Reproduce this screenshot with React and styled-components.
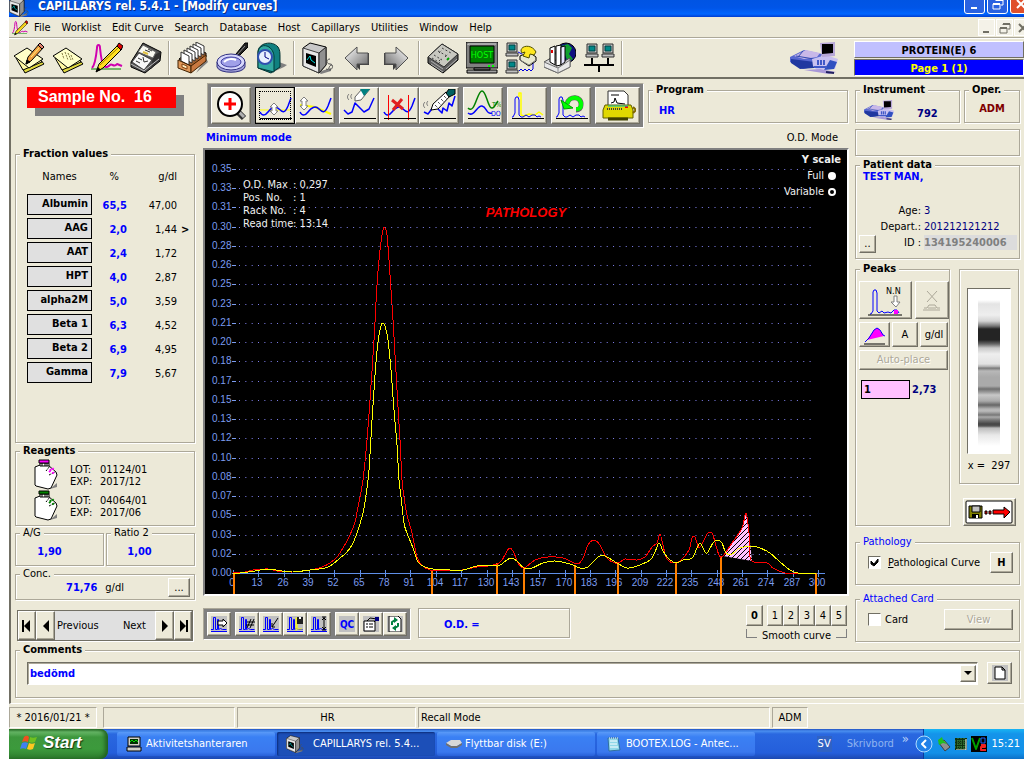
import React from 'react';
import styled, { createGlobalStyle, css } from 'styled-components';

const face = '#ece9d8';
const shade = '#aca899';
const dark = '#716f64';
const blue = '#0000ff';
const navy = '#000080';

const uiFont = '"DejaVu Sans Condensed", "DejaVu Sans", "Noto Sans", sans-serif';
const arial = '"Liberation Sans", Arial, sans-serif';

const GlobalStyle = createGlobalStyle`
  * {
    box-sizing: border-box;
  }

  body {
    margin: 0;
    background: #fff;
    color: #000;
    font-family: ${uiFont};
    font-size: 11px;
    line-height: 12px;
    overflow-x: hidden;
  }

  button, input, select {
    font: inherit;
    color: inherit;
    margin: 0;
    padding: 0;
  }

  svg {
    display: block;
    flex: none;
  }
`;

const raised = css`
  border: 1px solid;
  border-color: #fff ${dark} ${dark} #fff;
  box-shadow: inset -1px -1px 0 ${shade};
`;

const sunken = css`
  border: 1px solid;
  border-color: ${shade} #fff #fff ${shade};
`;

const etched = css`
  border: 1px solid ${shade};
  box-shadow: 1px 1px 0 #fff, inset 1px 1px 0 #fff;
`;

/* window frame */

const Screen = styled.div`
  padding: 0 0 9px 9px;
`;

const TitleBar = styled.header`
  display: flex;
  align-items: flex-end;
  height: 17px;
  overflow: hidden;
  background: linear-gradient(#0054e3 0, #0055e8 8px, #0066ff 14px, #003dd0 17px);
`;

const TitleText = styled.h1`
  flex: 1;
  margin: 0 0 0 9px;
  color: #fff;
  font-size: 12px;
  line-height: 13px;
  padding-bottom: 4px;
  text-shadow: 1px 1px 0 #0a2a80;
  white-space: nowrap;
`;

const Captions = styled.div`
  display: flex;
  gap: 2px;
  margin-right: -7px;
  padding-bottom: 3px;
`;

const Caption = styled.button`
  width: 21px;
  height: 21px;
  display: flex;
  align-items: center;
  justify-content: center;
  border: 1px solid #fff;
  border-radius: 3px;
  background: ${({ $close }) => ($close ? '#e0502c' : '#2a62e0')};
`;

const MenuBar = styled.nav`
  display: flex;
  align-items: center;
  height: 22px;
  padding-left: 3px;
  background: ${face};
  border-bottom: 1px solid #fff;
  box-shadow: inset 0 -1px 0 ${shade};
  overflow: hidden;
`;

const MenuItem = styled.button`
  border: 0;
  background: none;
  padding: 0 5px 0 6px;
  line-height: 18px;
`;

const ChildButtons = styled.div`
  display: flex;
  gap: 1px;
  margin: 0 -7px 0 auto;
`;

const ChildButton = styled.button`
  width: 17px;
  height: 17px;
  display: flex;
  align-items: center;
  justify-content: center;
  border: 1px solid #fff;
  background: #f4f2e8;
`;

const Toolbar = styled.div`
  display: flex;
  align-items: center;
  height: 38px;
  background: ${face};
`;

const IconButton = styled.button`
  width: 39px;
  height: 38px;
  display: flex;
  align-items: center;
  justify-content: center;
  border: 0;
  background: none;
`;

const Divider = styled.div`
  width: 2px;
  height: 34px;
  margin: 0 3px;
  background: ${shade};
  border-right: 1px solid #fff;
`;

const ToolbarEnd = styled.div`
  display: flex;
  align-items: center;
  gap: 16px;
  margin-left: auto;
`;

const Banner = styled.div`
  width: 170px;
`;

const BannerLine = styled.div`
  height: 17px;
  margin-top: 1px;
  border: 1px solid;
  border-color: ${({ $page }) => ($page ? `${dark} #fff #fff ${dark}` : `#fff ${dark} ${dark} #fff`)};
  background: ${({ $page }) => ($page ? blue : '#c0c0ff')};
  color: ${({ $page }) => ($page ? '#ffff00' : '#000')};
  font-weight: bold;
  line-height: 17px;
  text-align: center;
`;

const Workspace = styled.main`
  background: ${face};
  border-top: 2px solid ${dark};
  border-left: 2px solid ${dark};
  border-bottom: 1px solid #fff;
  padding: 0 4px 5px;
`;

const Columns = styled.div`
  display: flex;
`;

const LeftColumn = styled.section`
  width: 180px;
  flex: none;
  display: flex;
  flex-direction: column;

  > fieldset {
    flex: none;
  }
`;

const CenterColumn = styled.section`
  flex: 1;
  min-width: 0;
  margin: 0 6px 0 8px;
`;

const RightColumn = styled.section`
  width: 165px;
  flex: none;
  padding-top: 5px;
`;

/* group boxes */

const Group = styled.fieldset`
  ${etched}
  min-width: 0;
  margin: ${({ $top }) => $top || 0}px 0 0;
  padding: 0;
  min-height: ${({ $h }) => $h}px;
  ${({ $w }) => ($w ? `width: ${$w}px;` : 'flex: 1 0 auto;')}
`;

const Legend = styled.legend`
  margin-left: 4px;
  padding: 0 3px;
  background: ${face};
  line-height: 12px;
  font-weight: ${({ $plain }) => ($plain ? 'normal' : 'bold')};
  color: ${({ $link }) => ($link ? blue : '#000')};
`;

const Value = styled.span`
  color: ${({ $color }) => $color || blue};
  font-weight: bold;
`;

const PushButton = styled.button`
  ${raised}
  display: flex;
  align-items: center;
  justify-content: center;
  flex: none;
  width: ${({ $w }) => $w}px;
  height: ${({ $h }) => $h}px;
  background: ${face};
  font-weight: ${({ $bold }) => ($bold ? 'bold' : 'normal')};

  &:disabled {
    color: ${shade};
    text-shadow: 1px 1px 0 #fff;
  }
`;

/* left column */

const SampleBadge = styled.div`
  width: 149px;
  height: 21px;
  margin: 8px 0 40px 12px;
  padding-left: 11px;
  background: #f00;
  box-shadow: 8px 8px 0 #808080;
  color: #fff;
  font: bold 16px/19px ${arial};
  white-space: pre;
`;

const FractionTable = styled.table`
  width: 168px;
  margin-left: 11px;
  border-collapse: collapse;
  table-layout: fixed;

  th {
    height: 34px;
    padding: 0;
    font-weight: normal;
  }

  td {
    height: 24px;
    padding: 0;
    text-align: right;
  }

  th:last-child {
    text-align: right;
    padding-right: 18px;
  }
`;

const FractionName = styled.div`
  width: 65px;
  height: 21px;
  margin-bottom: 3px;
  padding-right: 3px;
  border: 1px solid #000;
  background: #e0e0e0;
  font-weight: bold;
  line-height: 17px;
`;

const Mark = styled.span`
  display: inline-block;
  width: 18px;
  padding-left: 4px;
  font-weight: bold;
  text-align: left;
`;

const ReagentList = styled.div`
  padding: 2px 0 0 17px;
`;

const Reagent = styled.div`
  display: flex;
  align-items: center;
  height: 31px;
  gap: 10px;
`;

const Lots = styled.dl`
  display: grid;
  grid-template-columns: 30px auto;
  margin: 0;
  padding-top: 2px;

  dd {
    margin: 0;
  }
`;

const Split = styled.div`
  display: flex;
  gap: 2px;
  margin: 1px 0 2px;

  > fieldset {
    flex: 1;
  }
`;

const Centered = styled.div`
  text-align: center;
  line-height: 26px;
  padding-right: ${({ $shift }) => $shift || 0}px;
`;

const ConcRow = styled.div`
  display: flex;
  align-items: center;
  gap: 8px;
  margin-top: -2px;
  padding: 0 4px 0 50px;

  > button {
    margin-left: auto;
  }
`;

const Pager = styled.div`
  display: flex;
  align-items: center;
  height: 31px;
  margin: 10px 2px 3px;
  border: 1px solid ${dark};
  background: #e0e0e0;
  box-shadow: 1px 1px 0 #fff;
`;

const PagerText = styled.div`
  flex: 1;
  display: flex;
  justify-content: space-between;
  padding: 0 9px 0 2px;
`;

/* centre column */

const ToolRow = styled.div`
  display: flex;
  align-items: flex-start;
  gap: 4px;
  height: 48px;
  padding: 4px 1px 0 4px;
`;

const ToolPanel = styled.div`
  display: flex;
  gap: 4px;
  padding: ${({ $pad }) => $pad}px;
  border: 1px solid;
  border-color: ${shade} #fff #fff ${shade};
  background: #808080;
`;

const ToolGroup = styled.div`
  display: flex;
`;

const ToolButton = styled(PushButton)`
  overflow: hidden;
  ${({ $active }) =>
    $active &&
    css`
      border-color: #000;
      outline: 1px dotted #000;
      outline-offset: -5px;
    `}
`;

const ProgramBody = styled.div`
  padding: 9px 10px 0;
`;

const ModeRow = styled.div`
  display: flex;
  justify-content: space-between;
  padding: 0 11px 0 3px;
  line-height: 21px;
`;

const Plot = styled.div`
  position: relative;
  height: 448px;
  overflow: hidden;
  border: 2px solid;
  border-color: #808080 #fff #fff #808080;
  background: #000;
  color: #f0f0f0;

  > svg {
    width: 100%;
    height: 444px;
  }
`;

const RunInfo = styled.dl`
  position: absolute;
  top: 28px;
  left: 38px;
  display: grid;
  grid-template-columns: 50px auto;
  margin: 0;
  line-height: 13px;

  dd {
    margin: 0;
  }

  dt {
    white-space: nowrap;
  }
`;

const ScaleBox = styled.div`
  position: absolute;
  top: 2px;
  right: 6px;
  display: flex;
  flex-direction: column;
  align-items: flex-end;
  line-height: 16px;

  label {
    display: flex;
    align-items: center;
    gap: 4px;
    padding-right: 5px;
  }
`;

const Radio = styled.input`
  appearance: none;
  width: 8px;
  height: 8px;
  border-radius: 50%;
  background: #fff;

  &:checked {
    background: #000;
    border: 2px solid #fff;
  }
`;

const BottomRow = styled.div`
  display: flex;
  align-items: flex-start;
  padding: 9px 2px 0 0;

  > div:first-child {
    margin-top: 3px;
  }
`;

const OdBox = styled.div`
  ${etched}
  width: 152px;
  height: 30px;
  margin: 3px auto 0 7px;
  padding-left: 25px;
  color: ${blue};
  font-weight: bold;
  line-height: 31px;
`;

const Smooth = styled.div`
  width: 101px;
`;

const SmoothButtons = styled.div`
  display: flex;
  justify-content: space-between;

  > div {
    display: flex;
  }
`;

const SmoothLabel = styled.div`
  display: flex;
  align-items: flex-end;
  justify-content: space-between;
  height: 16px;
  white-space: nowrap;

  &::before,
  &::after {
    content: '';
    flex: 1;
    height: 8px;
    margin-bottom: 4px;
    border: 0 solid #808080;
    border-bottom-width: 1px;
  }

  &::before {
    border-left-width: 1px;
    margin-right: 5px;
  }

  &::after {
    border-right-width: 1px;
    margin-left: 5px;
  }
`;

/* right column */

const Row = styled.div`
  display: flex;
  gap: ${({ $gap }) => $gap || 0}px;
  margin-top: ${({ $top }) => $top || 0}px;
`;

const InstrumentBody = styled.div`
  display: flex;
  align-items: flex-end;
  gap: 22px;
  padding: 4px 7px 1px;
`;

const BlankBox = styled.div`
  ${etched}
  height: 27px;
  margin: 6px 0 3px;
`;

const PatientName = styled.div`
  padding-left: 7px;
  height: 32px;
`;

const PatientGrid = styled.dl`
  display: grid;
  grid-template-columns: 18px 41px auto;
  column-gap: 3px;
  margin: 0;
  padding: 0 2px 0 3px;
  line-height: 16px;

  dt {
    grid-column: 2;
    text-align: right;
    white-space: nowrap;
  }

  dt:last-of-type {
    grid-column: auto;
  }

  dd {
    margin: 0;
    color: ${navy};
  }
`;

const PatientId = styled.span`
  display: block;
  height: 15px;
  background: #dcdcdc;
  color: #808080;
  font-weight: bold;
`;

const PeaksBody = styled.div`
  display: grid;
  gap: 3px;
  padding: 6px 3px 0;
`;

const PeakEntry = styled.label`
  display: flex;
  align-items: center;
  gap: 2px;
  margin: 7px 0 0 2px;
`;

const PeakInput = styled.input`
  width: 49px;
  height: 19px;
  padding: 0 2px;
  border: 1px solid #000;
  background: #ffc0ff;
  font-weight: bold;
`;

const GelColumn = styled.div`
  display: flex;
  flex-direction: column;
  align-items: center;
  width: 60px;
  padding-top: 6px;
`;

const GelBox = styled.div`
  ${etched}
  width: 60px;
  height: 215px;
  margin-bottom: 14px;
  padding-top: 18px;
  text-align: center;
  white-space: pre;
`;

const GelFrame = styled.div`
  border: 1px solid;
  border-color: ${dark} #fff #fff ${dark};
  width: 44px;
  height: 166px;
  margin: 0 auto 6px;
  padding-top: 11px;
  background: #fff;
`;

const Gel = styled.div`
  width: 22px;
  height: 146px;
  margin: 0 auto;
  background: linear-gradient(
    #fff 0, #e4e4e4 4px, #eee 15px, #d4d4d4 21px, #777 26px, #242424 29px, #242424 40px,
    #666 44px, #c8c8c8 48px, #eee 54px, #e2e2e2 64px, #aaa 67px, #777 68px, #b8b8b8 71px,
    #aaa 77px, #aaa 86px, #707070 89px, #999 92px, #c8c8c8 95px, #aaa 101px, #666 105px,
    #b4b4b4 109px, #bbb 111px, #777 115px, #aaa 117px, #777 120px, #444 124px, #555 126px,
    #bbb 128px, #e8e8e8 135px, #fff 146px
  );
`;

const CheckRow = styled.div`
  display: flex;
  align-items: center;
  justify-content: space-between;
  margin-top: 4px;
  padding: 0 6px 0 12px;

  label {
    display: flex;
    align-items: center;
    gap: ${({ $gap }) => $gap}px;
    white-space: nowrap;
  }
`;

const CheckBox = styled.span`
  ${sunken}
  display: grid;
  width: 13px;
  height: 13px;
  background: #fff;
  border-top-color: ${dark};
  border-left-color: ${dark};

  > * {
    grid-area: 1 / 1;
  }

  input {
    appearance: none;
    width: 11px;
    height: 11px;
  }

  svg {
    visibility: hidden;
    pointer-events: none;
  }

  input:checked + svg {
    visibility: visible;
  }
`;

/* comments, status bar, taskbar */

const CommentRow = styled.div`
  display: flex;
  gap: 9px;
  padding: 6px 7px 0 11px;
`;

const Combo = styled.div`
  position: relative;
  flex: 1;
  height: 23px;
  border: 1px solid;
  border-color: ${dark} #fff #fff ${dark};
  box-shadow: inset 1px 1px 0 ${shade};
  background: #fff;
`;

const ComboSelect = styled.select`
  appearance: none;
  width: 100%;
  height: 21px;
  padding: 0 2px;
  border: 0;
  background: none;
  color: ${blue};
  font-weight: bold;
`;

const ComboArrow = styled.span`
  ${raised}
  position: absolute;
  top: 2px;
  right: 1px;
  display: flex;
  align-items: center;
  justify-content: center;
  width: 16px;
  height: 17px;
  background: ${face};
  pointer-events: none;
`;

const StatusBar = styled.footer`
  display: flex;
  gap: 2px;
  padding: 3px 0 1px;
  background: ${face};
`;

const StatusCell = styled.div`
  ${sunken}
  ${({ $w }) => ($w ? `width: ${$w}px;` : 'flex: 1;')}
  height: 21px;
  padding-left: 2px;
  line-height: 20px;
  text-align: ${({ $left }) => ($left ? 'left' : 'center')};

  &:first-child {
    margin-right: 4px;
    padding: 0;
  }

  &:last-child {
    margin-right: 216px;
    padding: 0;
  }
`;

const Taskbar = styled.footer`
  display: flex;
  align-items: center;
  height: 30px;
  background: linear-gradient(#1f4fc0 0, #4a90f0 2px, #2a68e0 5px, #245edb 24px, #1c48b0 30px);
  color: #fff;
`;

const StartButton = styled.button`
  display: flex;
  align-items: center;
  gap: 5px;
  width: 99px;
  height: 30px;
  margin-right: 9px;
  padding: 0 0 2px 11px;
  border: 0;
  border-radius: 0 8px 8px 0;
  background: linear-gradient(#2f7a2f 0, #68b868 3px, #3d973d 8px, #3c9a3c 20px, #2c7c2c 30px);
  box-shadow: inset -3px 0 4px #206020;
  color: #fff;
  font: italic bold 17px/20px ${arial};
  text-shadow: 1px 1px 1px #103810;
`;

const Task = styled.button`
  display: flex;
  align-items: center;
  gap: ${({ $gap }) => $gap || 4}px;
  flex: 0 1 158px;
  min-width: 0;
  height: 24px;
  margin-right: 2px;
  padding-left: 9px;
  border: 0;
  border-radius: 2px;
  background: ${({ $active }) => ($active ? '#1c4fb8' : 'linear-gradient(#5a9af8, #3a80f4 5px, #3a78ee 20px, #2860d8)')};
  box-shadow: ${({ $active }) => ($active ? 'inset 1px 1px 2px #0c2c78' : 'none')};
  text-align: left;
  white-space: nowrap;
`;

const Tray = styled.div`
  display: flex;
  align-items: center;
  gap: 4px;
  width: 101px;
  height: 30px;
  padding-right: 4px;
  border-left: 1px solid #0a3a9c;
  background: linear-gradient(#18b4f4, #1494ea 5px, #1290e8 24px, #0c70c8);
  color: #fff;

  > svg:first-child {
    margin-left: -9px;
  }

  time {
    margin-left: auto;
  }
`;

const TaskbarRight = styled.div`
  display: flex;
  align-items: center;
  margin-left: auto;
  color: #8fb4f0;
`;

const Language = styled.span`
  margin-right: 15px;
  padding: 2px 1px;
  background: #2f62c4;
  color: #fff;
`;

const Chevrons = styled.span`
  margin: 0 14px 10px 8px;
  color: #b8d0f8;
  font-size: 13px;
`;

/* icons */

const Svg = ({ w = 32, h = w, vb, children }) => (
  <svg width={w} height={h} viewBox={vb || `0 0 ${w} ${h}`} fill="none" strokeLinejoin="round" aria-hidden="true">
    {children}
  </svg>
);

const Pencil = () => (
  <g stroke="#000">
    <path d="M13 22l2-7L27 1l4 4-13 14z" fill="#f0a040" />
    <path d="M25 3l4 4" />
    <path d="M27 1l4 4-2 2-4-4z" fill="#e08070" />
    <path d="M13 22l1-4 3 2z" fill="#000" />
    <path d="M18 15L26 6" stroke="#fff080" />
  </g>
);

const Sheets = () => (
  <g stroke="#000">
    <path d="M6 20l6 11 19-9-5-6z" fill="#e0d840" />
    <path d="M3 16l7 12 19-8-6-8z" fill="#fff8a0" />
    <path d="M1 14L14 6l16 11-14 9z" fill="#ffffc8" />
  </g>
);

const EditSheetIcon = () => (
  <Svg>
    <Sheets />
    <Pencil />
  </Svg>
);

const SheetIcon = () => (
  <Svg>
    <Sheets />
    <path d="M10 11l2 6M13 10l3 8M16 11l3 7M19 13l2 5" stroke="#807840" strokeDasharray="2 1" />
  </Svg>
);

const CurvePencilIcon = ({ w = 32 }) => (
  <Svg w={w} vb="0 0 32 32">
    <path d="M0 27h30" stroke="#008000" />
    <path d="M1 26c3-3 4-10 5-20 0-4 3-4 3 0 1 10 2 16 4 18s4 1 6-1 4 3 7-1l5 2" stroke="#d000b0" strokeWidth="2" />
    <path d="M5 30l3-8L27 3l4 4-19 19z" fill="#ffe020" stroke="#000" />
    <path d="M26 4l2-3 4 3-2 4z" fill="#e00000" stroke="#000" />
    <path d="M5 30l2-5 3 3z" fill="#000" />
    <path d="M9 23L27 6" stroke="#a08000" />
  </Svg>
);

const BoxInstrumentIcon = () => (
  <Svg>
    <path d="M1 20L13 1l18 9-1 9-15 12-14-6z" fill="#505050" stroke="#000" />
    <path d="M23 14l7-4v8l-9 9z" fill="#303030" />
    <path d="M13 3l13 7-3 6-15-6z" fill="#f8f8f0" stroke="#606060" />
    <path d="M2 20l7-9 13 7-8 10z" fill="#f8f8f8" stroke="#404040" />
    <path d="M6 19l4 2M8 16l4 2M13 15l1 5 4-1M15 8l5 2M18 7l4 2" stroke="#303030" />
    <path d="M1 22l13 7 1-1 14-11" stroke="#c0c0c0" />
    <path d="M13 10l5 2" stroke="#e0c040" strokeWidth="2" />
  </Svg>
);

const CardBoxIcon = () => (
  <Svg>
    <path d="M19 31l12-11-2-4z" fill="#808080" />
    <path d="M2 17L17 6l12 5v4L15 25z" fill="#a06030" stroke="#000" />
    {[5, 4, 3, 2, 1, 0].map((i) => (
      <path key={i} d={`M${4 + i * 3} ${10 - i * 2}l8 4v9l-8-4z`} fill="#fff" stroke="#303030" />
    ))}
    <path d="M1 18l13 6v7L1 26z" fill="#e09858" stroke="#402000" />
    <path d="M14 24l15-11v6L14 31z" fill="#c87840" stroke="#402000" />
    <path d="M5 22l5 2v3l-5-2z" fill="#fff0c0" stroke="#804010" />
  </Svg>
);

const MagnifierIcon = () => (
  <Svg>
    <path d="M17 18l3-6L29 1h3v4L22 15z" fill="#202020" stroke="#000" />
    <path d="M21 13l8-9" stroke="#909090" />
    <path d="M1 20v5c2 7 26 7 28 0v-5z" fill="#a0a0d8" stroke="#303080" />
    <ellipse cx="15" cy="20" rx="14" ry="8" fill="#d8d8fc" stroke="#303080" />
    <ellipse cx="15" cy="20" rx="10" ry="5" fill="#a0a0e8" stroke="#4040a0" />
    <path d="M8 20c3-3 8-4 12-2" stroke="#fff" strokeWidth="2" />
  </Svg>
);

const ClockIcon = () => (
  <Svg>
    <path d="M16 31l13-6 3-2-8-3z" fill="#808080" />
    <path d="M3 26V10c0-9 14-12 20-5 2 3 2 6 2 10v10l-9 6z" fill="#108080" stroke="#003030" />
    <path d="M3 26V10C4 4 9 2 14 5c4 3 5 7 5 10v15z" fill="#30a8a0" stroke="#003838" />
    <circle cx="10" cy="15" r="7" fill="#e8f0ff" stroke="#3050b0" strokeWidth="2" />
    <path d="M10 10v5l4 2" stroke="#000080" />
  </Svg>
);

const ComputerIcon = ({ w = 32 }) => (
  <Svg w={w} vb="0 0 32 32">
    <path d="M16 30l13-4v3l-10 3z" fill="#808080" />
    <path d="M1 6L8 1l16 4v18l-7 8L1 24z" fill="#c8c8c8" stroke="#000" />
    <path d="M1 6l16 5v20L1 24z" fill="#e8e8e8" stroke="#404040" />
    <path d="M17 11l7-6v18l-7 8z" fill="#909090" stroke="#202020" />
    <path d="M4 11l10 3v11L4 21z" fill="#000" />
    <path d="M5 18l3-4 1 4 4 3" stroke="#00e0e0" />
    <path d="M24 27c4 2 2-4 6-4M28 17c-4 0-4 5 0 5s3 6-1 6" stroke="#505050" />
  </Svg>
);

const ArrowIcon = ({ flip }) => (
  <Svg>
    <defs>
      <linearGradient id="steel" x1="0" y1="0" x2="1" y2="1">
        <stop offset="0" stopColor="#fff" />
        <stop offset="1" stopColor="#606060" />
      </linearGradient>
    </defs>
    <g transform={flip ? 'matrix(-1 0 0 1 32 0)' : undefined}>
      <path d="M8 17l11 11v-5h9V11h-1v11h-8z" fill="#404040" />
      <path d="M4 16L16 5v6h11v11H16v6z" fill="url(#steel)" stroke="#505050" />
    </g>
  </Svg>
);

const KeypadIcon = () => (
  <Svg>
    <path d="M1 15L15 2l16 10v6L16 31 1 21z" fill="#606060" stroke="#000" />
    <path d="M1 15L15 2l16 10-14 13z" fill="#c8c8c0" stroke="#303030" />
    <path d="M7 13l8 5M11 9l9 5M15 6l9 5M5 16l8 5M12 19l3-3M18 15l3-3M12 11l3-3" stroke="#404040" strokeDasharray="2 2" />
    <path d="M4 19l12 8M4 22l12 8M19 27l11-10" stroke="#b0b0b0" />
    <path d="M20 18l2-2" stroke="#00a000" strokeWidth="2" />
  </Svg>
);

const HostIcon = () => (
  <Svg>
    <path d="M0 0h32v26H0z" fill="#808080" stroke="#000" />
    <path d="M2 3V2h28" stroke="#d0d0d0" />
    <path d="M4 4h24v17H4z" fill="#008000" stroke="#000" />
    <text x="16" y="16" textAnchor="middle" fontSize="9" fontFamily={uiFont} fill="#00ff00">HOST</text>
    <path d="M22 24h2M26 24h2" stroke="#00ff00" strokeWidth="2" />
    <path d="M8 26h16v2H8zM1 28h30v3H1z" fill="#a0a0a0" stroke="#000" />
  </Svg>
);

const MiniPc = ({ x, y }) => (
  <g transform={`translate(${x} ${y})`}>
    <path d="M1 0h10v9H1zM0 10h12v3H0z" fill="#c0c0c0" stroke="#303030" />
    <path d="M3 2h6v5H3z" fill="#008888" stroke="#004040" />
  </g>
);

const ModemIcon = () => (
  <Svg>
    <MiniPc x={1} y={1} />
    <MiniPc x={1} y={18} />
    <path d="M13 10l4 2M14 29l2-2 2 2 2-2 2 2 2-2 2 2 2-2v-7" stroke="#0000e0" />
    <path d="M15 14l9-4 7 5v4l-7 5-9-6z" fill="#e8e8d0" stroke="#000" />
    <path d="M15 18l9 5 7-5" stroke="#808080" />
    <path d="M16 9c0-6 11-7 15 1l-2 3-4-1-1 4-6-2 2-4-3 1z" fill="#ffe820" stroke="#505000" />
  </Svg>
);

const GlobeMailIcon = () => (
  <Svg>
    <circle cx="22" cy="11" r="10" fill="#101080" stroke="#000" />
    <path d="M17 4l7-2 4 4-3 6 4 5-5 3-3-7z" fill="#10a030" />
    <path d="M0 20l7-4 10 5 9-5v9l-12 6-14-6z" fill="#d8d8d8" stroke="#505050" />
    <path d="M6 6l5-2v19l-5-3zM12 4l5-1v20l-5 1z" fill="#fff" stroke="#000" />
    <path d="M17 5l4-1v16l-4 3z" fill="#e8e8ff" stroke="#000" />
    <path d="M8 8v3" stroke="#e00000" strokeWidth="2" />
    <path d="M0 20l14 6 12-8v7l-12 6-14-6z" fill="#e8e8e8" stroke="#707070" />
    <path d="M14 26v5" stroke="#909090" />
  </Svg>
);

const NetworkIcon = () => (
  <Svg>
    <MiniPc x={3} y={2} />
    <MiniPc x={19} y={2} />
    <path d="M9 16v7M25 16v7M1 23h30M16 23v7" stroke="#000" strokeWidth="2" />
  </Svg>
);

const DeviceIcon = ({ w, h }) => (
  <Svg w={w} h={h} vb="0 0 48 32">
    <path d="M0 15l14-7 18 4-4 12-15 3-13-7z" fill="#5868d0" />
    <path d="M1 17l24 3-1 6-14 1-9-6z" fill="#2038a0" />
    <path d="M4 14l12-6 14 3-3 4-13 2z" fill="#c8b8e8" />
    <path d="M6 14l18 3M13 9l-5 6" stroke="#3048b0" />
    <path d="M22 17l14-4 12 4-3 10-18 1-4-4z" fill="#c8c0f0" />
    <path d="M40 18l7 2-3 7-10 1z" fill="#3050c0" />
    <path d="M24 25h13M28 18v5M31 18v5M34 18v5" stroke="#4058c8" strokeWidth="2" />
    <path d="M30 1l15-1v14l-13 1z" fill="#b8a8d8" />
    <path d="M32 2h11v9l-11 1z" fill="#000" />
    <path d="M14 28l16-1 16 3-7 2z" fill="#a898d8" />
    <path d="M36 30l8 1" stroke="#202060" strokeWidth="2" />
  </Svg>
);

const wave = 'M3 23C5 27 8 27 11 23S18 16 22 20S28 24 31 17L34 9';
const spectrum = 'M3 28h1l2-4V10l1-2h2l1 3v15l2 2h2l3-2 3 2 3-2h3l2 2 2-1 2 1';

const Baseline = () => <path d="M3 29.5h32" stroke="#000" />;
const Wave = () => <path d={wave} stroke="#0000ff" strokeWidth="1.5" />;

const toolIcons = {
  zoom: (
    <>
      <path d="M24 22l7 7" stroke="#303030" strokeWidth="6" />
      <path d="M25 22l6 6" stroke="#b0b0b0" strokeWidth="3" />
      <circle cx="17" cy="15" r="12" fill="#fff" stroke="#000" strokeWidth="2" />
      <path d="M11 15h12M17 9v12" stroke="#f00" strokeWidth="3" />
    </>
  ),
  minimum: (
    <>
      <path d="M3 21h30" stroke="#ffff00" />
      <Wave />
      <path d="M17 14l4 4h-2v4h2l-4 4-4-4h2v-4h-2z" fill="#fff" stroke="#808080" />
      <Baseline />
    </>
  ),
  slope: (
    <>
      <path d="M3 16l15 2 16 7" stroke="#ffff00" strokeWidth="2" />
      <Wave />
      <path d="M7 8l4 4H9v5h2l-4 4-4-4h2v-5H3z" fill="#fff" stroke="#808080" />
      <Baseline />
    </>
  ),
  erase: (
    <>
      <path d="M3 21l4 4 4-2 3-9 5 5 4 4 5-3 5-11" stroke="#0000ff" strokeWidth="1.5" />
      <path d="M14 8l7-8h8l-9 11-6 1z" fill="#fff" stroke="#606060" />
      <path d="M19 0h10l-6 7z" fill="#008080" />
      <path d="M8 5c-2 2-2 4 0 6M11 5c-2 2-1 4 0 5" stroke="#707070" />
      <Baseline />
    </>
  ),
  remove: (
    <>
      <Wave />
      <path d="M7.5 6v25M27.5 6v25" stroke="#f00" />
      <path d="M11 11l11 9M21 10l-9 11" stroke="#e02020" strokeWidth="3" />
      <Baseline />
    </>
  ),
  cut: (
    <>
      <path d="M3 23l4 2 6-8M17 20l4 4 1-5 4 3 2-8 3 3 3-10" stroke="#0000ff" strokeWidth="1.5" />
      <path d="M10 21l2-6L25 3l4 4-12 13z" fill="#fff" stroke="#000" />
      <path d="M14 16l3 3M17 13l3 3M20 10l3 3M23 7l3 3" stroke="#000" strokeDasharray="1 1" />
      <path d="M25 4l3-4h6v5l-6 3z" fill="#006060" stroke="#000" />
      <path d="M4 13c-2 2-2 4 0 6M7 12c-2 2-1 4 0 5" stroke="#707070" />
      <Baseline />
    </>
  ),
  units: (
    <>
      <path d="M3 19c7 7 9-17 14-17s6 22 12 16l4-6" stroke="#008000" strokeWidth="1.5" />
      <path d="M3 24c6 5 9-8 14-7s4 9 10 7" stroke="#0000ff" strokeWidth="1.5" />
      <text x="27" y="18" fontSize="7" fill="#008000">T%</text>
      <text x="26" y="27" fontSize="7" fill={blue}>DO</text>
      <Baseline />
    </>
  ),
  overlay: (
    <>
      <path d="M10 8V4h2v22l3 1 5-2 6 1 4-3 4 3" stroke="#ffff00" strokeWidth="1.5" />
      <path d={spectrum} stroke="#0000ff" />
      <Baseline />
    </>
  ),
  undo: (
    <>
      <path d={spectrum} stroke="#0000ff" />
      <path d="M14 15c2-9 15-8 14 1 0 3-2 5-5 5" stroke="#606060" strokeWidth="5" />
      <path d="M14 15c2-9 15-8 14 1 0 3-2 4-5 4" stroke="#00ff00" strokeWidth="4" />
      <path d="M8 11l3 9 9-1z" fill="#00ff00" stroke="#00a000" />
      <Baseline />
    </>
  ),
  print: (
    <>
      <path d="M8 2h16l4 4v14H8z" fill="#fff" stroke="#303030" />
      <path d="M11 6h8M11 14l3-1 1-4 2 5 8 1" stroke="#000" />
      <path d="M5 16h26l2 5v8H3v-8z" fill="#e0d800" stroke="#606000" />
      <path d="M7 20h16" stroke="#404040" strokeWidth="2" strokeDasharray="1 1" />
      <path d="M25 18h3" stroke="#f00" strokeWidth="2" />
      <path d="M33 18l3 3-3 3" stroke="#806800" strokeWidth="2" />
      <path d="M8 30h20" stroke="#404000" strokeWidth="3" />
      <path d="M8 17h20" stroke="#00c0c0" />
    </>
  ),
};

const Tool = ({ name, label, active, w = 40 }) => (
  <ToolButton $w={w} $h={37} $active={active} aria-label={label}>
    <Svg w={36} h={33}>{toolIcons[name]}</Svg>
  </ToolButton>
);

const miniIcons = {
  next: <path d="M7 5h5V3l4 4-4 4V9H7z" fill="#fff" stroke="#000" />,
  grid: <path d="M8 12l4-9M11 12l4-9M8 6h8M7 9h8" stroke="#000" />,
  arrow: <path d="M9 11l6-9M9 7v4h3" stroke="#000" />,
  save: (
    <>
      <path d="M9 15V2h1v11h5" stroke="#ffff00" />
      <path d="M10 1h6v7h-6z" fill="#202020" />
      <path d="M12 1h2v2h-2z" fill="#fff" />
    </>
  ),
  height: <path d="M11 1h4M11 14h4M13 1v13M11 4l2-2 2 2M11 11l2 2 2-2" stroke="#000" />,
};

const MiniTool = ({ name, label, children }) => (
  <PushButton $w={24} $h={24} aria-label={label}>
    <Svg w={16} h={16}>
      <path d="M0 0h16v16H0z" fill="#c0c0c0" />
      {children || (
        <path d="M0 13.5h2.5v-12h2v12h2v-10h1v10l2-1 2 1 4 0M0 15.5h16" stroke="#0000ff" />
      )}
      {miniIcons[name]}
    </Svg>
  </PushButton>
);

const BottleIcon = ({ cap }) => (
  <Svg w={27} h={31}>
    <path d="M17 30l7-6v4z" fill="#808080" />
    <path d="M2 8l5-2h8l8 7 1 3-6 13-3 1-12-3-1-1z" fill="#fff" stroke="#000" />
    <path d="M13 12l4-5M16 16l6-3" stroke="#000" strokeDasharray="2 1" />
    <path d="M16 13l5-4M17 10l4 5" stroke={cap} strokeDasharray="2 2" strokeWidth="2" />
    <path d="M7 4h9v3H7z" fill="#fff" stroke="#000" />
    <path d="M6 1h10v3H6z" fill={cap} stroke="#000" />
    <path d="M9 4v3M12 4v3M14 4v3" stroke="#000" />
  </Svg>
);

const NavIcon = ({ bar, flip }) => (
  <Svg w={12} h={12}>
    <g transform={flip ? 'matrix(-1 0 0 1 12 0)' : undefined}>
      <path d="M9 0v12L3 6z" fill="#000" />
      {bar && <path d="M1 0h2v12H1z" fill="#000" />}
    </g>
  </Svg>
);

const Cross = ({ color = '#fff' }) => (
  <Svg w={12} h={12}>
    <path d="M2 2l8 8M10 2l-8 8" stroke={color} strokeWidth="2" />
  </Svg>
);

const Minimize = ({ color = '#fff' }) => (
  <Svg w={12} h={12}>
    <path d="M2 10h6" stroke={color} strokeWidth="2" />
  </Svg>
);

const Restore = ({ color = '#fff' }) => (
  <Svg w={12} h={12}>
    <path d="M4 3V2h7v5H9M1 6h7v5H1zM1 6h7" stroke={color} />
    <path d="M4 2h7M1 6h7" stroke={color} strokeWidth="2" />
  </Svg>
);

const FloppyArrow = () => (
  <Svg w={48} h={24}>
    <rect x="1" y="1" width="46" height="22" rx="1" fill="#fff" stroke="#000" />
    <path d="M4 6h13v12H4z" fill="#808000" stroke="#000" />
    <path d="M7 6h8v6H7z" fill="#c0c0c0" stroke="#000" />
    <path d="M7 14h7v4H7z" fill="#000" />
    <path d="M11 15h2v3h-2z" fill="#fff" />
    <path d="M20 11h2v3h-2zM24 11h2v3h-2zM28 10h11V7l6 5-6 6v-4H28z" fill="#f00" stroke="#000" />
  </Svg>
);

const WindowsFlag = () => (
  <Svg w={18} h={18}>
    <path d="M4 3c2-2 4-1 5 0L8 8C6 7 4 7 2 8z" fill="#f05020" />
    <path d="M10 3c2 1 4 1 7 0l-2 5c-2 1-4 1-6 0z" fill="#70c020" />
    <path d="M2 9c2-1 4-1 6 0l-2 6c-2-1-4-1-6 0z" fill="#4080f0" />
    <path d="M9 9c2 1 4 1 6 0l-2 6c-2 1-4 1-6 0z" fill="#ffc820" />
  </Svg>
);

/* curve plot */

const originX = 28;
const originY = 423;
const unit = 585 / 300;

const odLabels = [
  '0.35', '0.33', '0.31', '0.30', '0.28', '0.26', '0.25', '0.23', '0.21', '0.20', '0.18',
  '0.17', '0.15', '0.13', '0.12', '0.10', '0.08', '0.07', '0.05', '0.03', '0.02', '0.00',
];
const positions = Array.from({ length: 24 }, (_, i) => Math.round((i * 300) / 23));

const red = [
  [28, 423], [40, 422], [48, 420], [63, 419], [72, 421], [88, 422], [105, 420], [117, 417],
  [125, 413], [132, 407], [138, 398], [145, 385], [150, 372], [153, 357], [158, 330], [162, 290],
  [165, 250], [169, 190], [172, 135], [175, 100], [178, 80], [180, 78], [182, 85], [184, 110],
  [188, 170], [192, 240], [195, 290], [197, 330], [199, 347], [202, 365], [207, 383], [212, 407],
  [217, 415], [225, 420], [242, 421], [257, 420], [272, 417], [283, 416], [292, 414], [297, 410],
  [302, 401], [305, 398], [309, 403], [313, 413], [319, 418], [330, 410], [343, 407], [358, 408],
  [372, 414], [378, 408], [383, 395], [389, 390], [395, 395], [402, 408], [410, 413], [415, 412],
  [420, 409], [432, 410], [440, 407], [447, 397], [452, 393], [455, 384], [458, 395], [462, 409],
  [471, 413], [478, 408], [484, 400], [487, 388], [490, 387], [494, 398], [499, 390], [503, 383],
  [507, 383], [510, 392], [514, 405], [518, 406], [527, 393], [537, 378], [541, 363], [544, 383],
  [546, 410], [562, 413], [568, 418], [580, 423], [593, 423],
];

const yellow = [
  [28, 423], [35, 423], [50, 421], [63, 419], [77, 421], [88, 422], [105, 420], [120, 418],
  [128, 414], [135, 408], [142, 402], [148, 393], [153, 380], [158, 363], [161, 345], [164, 320],
  [167, 270], [170, 225], [173, 192], [176, 176], [178, 173], [180, 176], [183, 190], [186, 220],
  [189, 260], [192, 295], [194, 330], [196, 347], [199, 373], [202, 383], [208, 398], [213, 412],
  [220, 417], [228, 419], [245, 420], [258, 420], [272, 416], [283, 415], [293, 416], [298, 413],
  [302, 410], [306, 408], [312, 411], [319, 418], [327, 418], [338, 413], [350, 411], [365, 414],
  [375, 418], [383, 417], [393, 407], [400, 406], [412, 413], [422, 418], [432, 416], [445, 410],
  [450, 402], [454, 393], [458, 401], [463, 408], [471, 413], [478, 410], [487, 408], [492, 398],
  [495, 393], [498, 398], [502, 403], [508, 393], [513, 390], [517, 393], [521, 403], [527, 404],
  [535, 398], [547, 396], [555, 398], [565, 403], [575, 412], [585, 420], [593, 423], [611, 423],
];

const cuts = [[29, 423], [227, 420], [292, 413], [319, 417], [370, 415], [413, 413], [471, 413], [516, 406], [611, 423]];

// Catmull-Rom through the samples, written out as cubic segments
const smoothPath = (pts) =>
  pts.slice(1).reduce((d, p, i) => {
    const p0 = pts[i - 1] || pts[i];
    const p1 = pts[i];
    const p3 = pts[i + 2] || p;
    const c1 = [p1[0] + (p[0] - p0[0]) / 6, p1[1] + (p[1] - p0[1]) / 6];
    const c2 = [p[0] - (p3[0] - p1[0]) / 6, p[1] - (p3[1] - p1[1]) / 6];
    return `${d}C${c1} ${c2} ${p}`;
  }, `M${pts[0]}`);

const CurvePlot = () => (
  <svg viewBox="0 0 642 444" role="img" aria-label="Electrophoresis curve">
    <defs>
      <pattern id="hatch" width="5" height="5" patternUnits="userSpaceOnUse">
        <path d="M0 0h5v5H0z" fill="#ffc0ff" />
        <path d="M-1 6L6-1M-1 1l2-2M4 6l2-2" stroke="#000" />
      </pattern>
    </defs>
    <g fontFamily={arial} fontSize="10" fill="#7b9cf0" stroke="none">
      {odLabels.map((label, i) => {
        const y = Math.round(19 + (i * 404) / 21);
        return (
          <g key={label}>
            <text x="7" y={y + 3}>{label}</text>
            <path d={`M27 ${y + 0.5}h4`} stroke="#7b9cf0" />
            {i < 21 && (
              <path d={`M34 ${y + 0.5}H609`} stroke="#8080f0" strokeDasharray="1 5.34" />
            )}
          </g>
        );
      })}
      {positions.map((pos) => {
        const x = Math.round(originX + pos * unit);
        return (
          <g key={pos}>
            <path d={`M${x + 0.5} 420v7`} stroke="#5f8fe8" />
            <text x={x - 1} y="436" textAnchor="middle">{pos}</text>
          </g>
        );
      })}
      <path d={`M27 ${originY + 0.5}H620`} stroke="#5f8fe8" />
    </g>
    <path d="M518 406L527 393 537 378 541 363 544 383 547 411z" fill="url(#hatch)" />
    <g fill="none" shapeRendering="crispEdges">
      {cuts.map(([x, y]) => (
        <path key={x} d={`M${x} ${y}V444`} stroke="#ff8000" strokeWidth="2" />
      ))}
      <path d={smoothPath(red)} stroke="#ff0000" />
      <path d={smoothPath(yellow)} stroke="#ffff00" />
    </g>
    <text x="321" y="67" textAnchor="middle" fontFamily={arial} fontSize="13" fontWeight="bold" fontStyle="italic" fill="#f00">
      PATHOLOGY
    </text>
  </svg>
);

const menus = ['File', 'Worklist', 'Edit Curve', 'Search', 'Database', 'Host', 'Capillarys', 'Utilities', 'Window', 'Help'];

const toolbarGroups = [
  [['Edit worklist', EditSheetIcon], ['Worklist', SheetIcon], ['Edit curve', CurvePencilIcon], ['Instrument', BoxInstrumentIcon]],
  [['Card index', CardBoxIcon], ['Search', MagnifierIcon], ['History', ClockIcon]],
  [['Workstation', ComputerIcon], ['Back', ArrowIcon], ['Forward', () => <ArrowIcon flip />]],
  [['Keypad', KeypadIcon], ['Host', HostIcon], ['Modem', ModemIcon], ['Mail', GlobeMailIcon], ['Network', NetworkIcon]],
];

const fractions = [
  ['Albumin', '65,5', '47,00'],
  ['AAG', '2,0', '1,44', '>'],
  ['AAT', '2,4', '1,72'],
  ['HPT', '4,0', '2,87'],
  ['alpha2M', '5,0', '3,59'],
  ['Beta 1', '6,3', '4,52'],
  ['Beta 2', '6,9', '4,95'],
  ['Gamma', '7,9', '5,67'],
];

const reagents = [
  ['01124/01', '2017/12', '#ff00ff'],
  ['04064/01', '2017/06', '#008000'],
];

const WindowHeader = () => (
  <>
    <TitleBar>
      <ComputerIcon w={20} />
      <TitleText>CAPILLARYS rel. 5.4.1 - [Modify curves]</TitleText>
      <Captions>
        <Caption aria-label="Minimize"><Minimize /></Caption>
        <Caption aria-label="Restore"><Restore /></Caption>
        <Caption $close aria-label="Close"><Cross /></Caption>
      </Captions>
    </TitleBar>
    <MenuBar>
      <CurvePencilIcon w={16} />
      {menus.map((menu) => (
        <MenuItem key={menu}>{menu}</MenuItem>
      ))}
      <ChildButtons>
        <ChildButton aria-label="Minimize curve"><Minimize color={dark} /></ChildButton>
        <ChildButton aria-label="Restore curve"><Restore color={dark} /></ChildButton>
        <ChildButton aria-label="Close curve"><Cross color={dark} /></ChildButton>
      </ChildButtons>
    </MenuBar>
    <Toolbar>
      {toolbarGroups.map((group) => (
        <React.Fragment key={group[0][0]}>
          {group.map(([label, Icon]) => (
            <IconButton key={label} aria-label={label}><Icon /></IconButton>
          ))}
          <Divider />
        </React.Fragment>
      ))}
      <ToolbarEnd>
        <DeviceIcon w={48} h={32} />
        <Banner>
          <BannerLine>PROTEIN(E) 6</BannerLine>
          <BannerLine $page>Page 1 (1)</BannerLine>
        </Banner>
      </ToolbarEnd>
    </Toolbar>
  </>
);

const FractionPanel = () => (
  <LeftColumn>
    <SampleBadge>{'Sample No.  16'}</SampleBadge>
    <Group $h={295}>
      <Legend>Fraction values</Legend>
      <FractionTable>
        <colgroup>
          <col width="65" />
          <col width="35" />
          <col width="68" />
        </colgroup>
        <thead>
          <tr><th>Names</th><th>&nbsp;&nbsp;&nbsp;%</th><th>g/dl</th></tr>
        </thead>
        <tbody>
          {fractions.map(([name, pct, conc, mark]) => (
            <tr key={name}>
              <td><FractionName>{name}</FractionName></td>
              <td><Value>{pct}</Value></td>
              <td>{conc}<Mark>{mark}</Mark></td>
            </tr>
          ))}
        </tbody>
      </FractionTable>
    </Group>
    <Group $h={81} $top={2}>
      <Legend>Reagents</Legend>
      <ReagentList>
        {reagents.map(([lot, exp, cap]) => (
          <Reagent key={lot}>
            <BottleIcon cap={cap} />
            <Lots>
              <dt>LOT:</dt><dd>{lot}</dd>
              <dt>EXP:</dt><dd>{exp}</dd>
            </Lots>
          </Reagent>
        ))}
      </ReagentList>
    </Group>
    <Split>
      <Group $h={39}>
        <Legend $plain>A/G</Legend>
        <Centered $shift={20}><Value>1,90</Value></Centered>
      </Group>
      <Group $h={39}>
        <Legend $plain>Ratio 2</Legend>
        <Centered $shift={22}><Value>1,00</Value></Centered>
      </Group>
    </Split>
    <Group $h={32}>
      <Legend $plain>Conc.</Legend>
      <ConcRow>
        <Value>71,76</Value>
        <span>g/dl</span>
        <PushButton $w={22} $h={19}>...</PushButton>
      </ConcRow>
    </Group>
    <Pager>
      <PushButton $w={18} $h={29} aria-label="First"><NavIcon bar /></PushButton>
      <PushButton $w={19} $h={29} aria-label="Previous sample"><NavIcon /></PushButton>
      <PagerText>
        <span>Previous</span>
        <span>Next</span>
      </PagerText>
      <PushButton $w={19} $h={29} aria-label="Next sample"><NavIcon flip /></PushButton>
      <PushButton $w={18} $h={29} aria-label="Last"><NavIcon bar flip /></PushButton>
    </Pager>
  </LeftColumn>
);

const CurvePanel = () => (
  <CenterColumn>
    <ToolRow>
      <ToolPanel $pad={3}>
        <Tool name="zoom" label="Zoom" />
        <ToolGroup>
          <Tool name="minimum" label="Minimum mode" active />
          <Tool name="slope" label="Slope mode" />
        </ToolGroup>
        <ToolGroup>
          <Tool name="erase" label="Erase" />
          <Tool name="remove" label="Remove fraction" />
          <Tool name="cut" label="Smooth section" />
        </ToolGroup>
        <Tool name="units" label="Units" />
        <Tool name="overlay" label="Overlay" />
        <Tool name="undo" label="Undo" />
        <Tool name="print" label="Print" w={45} />
      </ToolPanel>
      <Group $h={39} $top={1}>
        <Legend>Program</Legend>
        <ProgramBody><Value>HR</Value></ProgramBody>
      </Group>
    </ToolRow>
    <ModeRow>
      <Value>Minimum mode</Value>
      <span>O.D. Mode</span>
    </ModeRow>
    <Plot>
      <CurvePlot />
      <RunInfo>
        <dt>O.D. Max</dt><dd>: 0,297</dd>
        <dt>Pos. No.</dt><dd>: 1</dd>
        <dt>Rack No.</dt><dd>: 4</dd>
        <dt>Read time</dt><dd>: 13:14</dd>
      </RunInfo>
      <ScaleBox>
        <strong>Y scale</strong>
        <label>Full<Radio type="radio" name="scale" /></label>
        <label>Variable<Radio type="radio" name="scale" defaultChecked /></label>
      </ScaleBox>
    </Plot>
    <BottomRow>
      <ToolPanel $pad={3}>
        <MiniTool name="next" label="Next curve" />
        <ToolGroup>
          <MiniTool name="grid" label="Number" />
          <MiniTool name="arrow" label="Scale" />
          <MiniTool name="save" label="Save curve" />
          <MiniTool name="height" label="Height" />
        </ToolGroup>
        <ToolGroup>
          <MiniTool label="Quality control">
            <text x="8" y="12" textAnchor="middle" fontSize="10" fontWeight="bold" fill={blue}>QC</text>
          </MiniTool>
          <MiniTool label="Properties">
            <path d="M1 5h11v10H1z" fill="#fff" stroke="#000" />
            <path d="M3 8h2M6 8h4M3 11h2M6 11h4M4 5l3-3 7 1-3 3" stroke="#000" />
            <path d="M12 1h4v4h-4z" fill={navy} />
          </MiniTool>
          <MiniTool label="Refresh">
            <path d="M2 0h9l3 3v13H2z" fill="#fff" stroke="#000" />
            <path d="M5 9V6l3-2M11 7v3l-3 2" stroke="#008040" strokeWidth="2" />
            <path d="M7 1l4 3-4 3zM9 9l-4 3 4 3z" fill="#008040" />
          </MiniTool>
        </ToolGroup>
      </ToolPanel>
      <OdBox>O.D. =</OdBox>
      <Smooth>
        <SmoothButtons>
          <PushButton $w={17} $h={21} $bold>0</PushButton>
          <div>
            {[1, 2, 3, 4, 5].map((n) => (
              <PushButton key={n} $w={16} $h={21}>{n}</PushButton>
            ))}
          </div>
        </SmoothButtons>
        <SmoothLabel>Smooth curve</SmoothLabel>
      </Smooth>
    </BottomRow>
  </CenterColumn>
);

const PeaksPanel = () => (
  <Group $w={95} $h={263}>
    <Legend>Peaks</Legend>
    <PeaksBody>
      <Row $gap={3}>
        <PushButton $w={53} $h={38} aria-label="Numbered peaks">
          <Svg w={36} h={31}>
            <path d="M2 29h1l2-3V7l1-2h2l1 3v18l2 2 3-2 2 2 4-1 3 1 3-3h3l2 3" stroke={blue} />
            <path d="M26 25h4v4h-4z" fill="#f0f" />
            <path d="M0 30h34" stroke="#000" />
            <path d="M26 11h3v6h3l-4 5-5-5h3z" fill="#fff" stroke="#808080" />
            <text x="18" y="9" fontSize="9" fill="#000">N.N</text>
          </Svg>
        </PushButton>
        <PushButton $w={34} $h={38} disabled aria-label="Delete peak">
          <Svg w={18} h={22}>
            <path d="M4 2l10 11M14 2L4 13M1 19h3l2-3h6l2 3h3M5 19h8M0 21h17" stroke={shade} />
          </Svg>
        </PushButton>
      </Row>
      <Row $gap={2}>
        <PushButton $w={31} $h={25} aria-label="Fill peak">
          <Svg w={24} h={20}>
            <path d="M4 15L12 4l3-1 6 8z" fill="#f0f" />
            <path d="M2 17l4-4 5-8 3-2 3 2 3 5 2 1" stroke={blue} />
            <path d="M1 19h21" stroke="#000" />
          </Svg>
        </PushButton>
        <PushButton $w={26} $h={25}>A</PushButton>
        <PushButton $w={28} $h={25}>g/dl</PushButton>
      </Row>
      <PushButton $w={89} $h={20} disabled>Auto-place</PushButton>
      <PeakEntry>
        <PeakInput defaultValue="1" aria-label="Peak" />
        <Value $color={navy}>2,73</Value>
      </PeakEntry>
    </PeaksBody>
  </Group>
);

const Check = ({ id, checked }) => (
  <CheckBox>
    <input id={id} type="checkbox" defaultChecked={checked} />
    <Svg w={11} h={11}>
      <path d="M2 4l3 3 4-5v3L5 9 2 7z" fill="#000" stroke="#000" />
    </Svg>
  </CheckBox>
);

const DetailPanel = () => (
  <RightColumn>
    <Row $gap={4}>
      <Group $w={105} $h={39}>
        <Legend>Instrument</Legend>
        <InstrumentBody>
          <DeviceIcon w={32} h={20} />
          <Value $color={navy}>792</Value>
        </InstrumentBody>
      </Group>
      <Group $w={56} $h={39}>
        <Legend>Oper.</Legend>
        <Centered><Value $color="#800000">ADM</Value></Centered>
      </Group>
    </Row>
    <BlankBox />
    <Group $h={100}>
      <Legend>Patient data</Legend>
      <PatientName><Value>TEST MAN,</Value></PatientName>
      <PatientGrid>
        <dt>Age:</dt><dd>3</dd>
        <dt>Depart.:</dt><dd>201212121212</dd>
        <PushButton $w={17} $h={18}>..</PushButton>
        <dt>ID :</dt><dd><PatientId>134195240006</PatientId></dd>
      </PatientGrid>
    </Group>
    <Row $gap={9} $top={4}>
      <PeaksPanel />
      <GelColumn>
        <GelBox>
          <GelFrame><Gel /></GelFrame>
          {'x =  297'}
        </GelBox>
        <PushButton $w={53} $h={28} aria-label="Save and continue"><FloppyArrow /></PushButton>
      </GelColumn>
    </Row>
    <Group $h={49} $top={10}>
      <Legend $plain $link>Pathology</Legend>
      <CheckRow $gap={7}>
        <label htmlFor="pathological">
          <Check id="pathological" checked />
          <span><u>P</u>athological Curve</span>
        </label>
        <PushButton $w={23} $h={21} $bold>H</PushButton>
      </CheckRow>
    </Group>
    <Group $h={49} $top={8}>
      <Legend $plain $link>Attached Card</Legend>
      <CheckRow $gap={4}>
        <label htmlFor="card">
          <Check id="card" />
          <span>Card</span>
        </label>
        <PushButton $w={69} $h={21} disabled>View</PushButton>
      </CheckRow>
    </Group>
  </RightColumn>
);

const Comments = () => (
  <Group $h={54}>
    <Legend>Comments</Legend>
    <CommentRow>
      <Combo>
        <ComboSelect aria-label="Comments">
          <option>bedömd</option>
        </ComboSelect>
        <ComboArrow>
          <Svg w={8} h={5}><path d="M0 0h8L4 4z" fill="#000" /></Svg>
        </ComboArrow>
      </Combo>
      <PushButton $w={25} $h={22} aria-label="New comment">
        <Svg w={16} h={16}>
          <path d="M0 0h16v16H0z" fill="#c0c0c0" />
          <path d="M3 2h7l3 3v9H3zM10 2v3h3" fill="#fff" stroke="#000" />
        </Svg>
      </PushButton>
    </CommentRow>
  </Group>
);

const Desktop = () => (
  <Taskbar>
    <StartButton><WindowsFlag />Start</StartButton>
    <Task>
      <Svg w={16} h={16}>
        <path d="M2 1h12v9H2zM1 11h14v4H1z" fill="#d0d0c8" stroke="#000" />
        <path d="M4 3h8v5H4z" fill="#003000" />
        <path d="M4 6l2-2 2 2 2-2 2 2" stroke="#00e000" />
      </Svg>
      Aktivitetshanteraren
    </Task>
    <Task $active $gap={9}><ComputerIcon w={18} />CAPILLARYS rel. 5.4...</Task>
    <Task $gap={3}>
      <Svg w={16} h={16}>
        <path d="M0 7l5-3h9l2 3-5 3H5z" fill="#d8d8d8" />
        <path d="M0 7l5 3h6l5-3v2l-5 3H5L0 9z" fill="#707070" />
      </Svg>
      Flyttbar disk (E:)
    </Task>
    <Task>
      <Svg w={16} h={16}>
        <path d="M2 2h10l2 12-11 1z" fill="#90d8e8" stroke="#3070a0" />
        <path d="M4 5h7M4 8h7M4 11h8" stroke="#fff" />
        <path d="M3 2h9" stroke="#fff" strokeDasharray="1 1" />
      </Svg>
      BOOTEX.LOG - Antec...
    </Task>
    <TaskbarRight>
      <Language>SV</Language>
      Skrivbord
      <Chevrons>»</Chevrons>
      <Tray>
        <Svg w={18} h={18}>
          <circle cx="9" cy="9" r="8" fill="#2080e8" stroke="#b0dcff" />
          <path d="M11 5L7 9l4 4" stroke="#fff" strokeWidth="2" />
        </Svg>
        <Svg w={14} h={16}>
          <path d="M2 7l5-3 6 7-5 4z" fill="#909090" stroke="#404040" />
          <path d="M1 4l4-3 1 3 4 4-4-1-4 2z" fill="#20c020" />
        </Svg>
        <Svg w={12} h={12}>
          <path d="M0 0h12v12H0z" fill="#103010" />
          <path d="M3 0v12M6 0v12M9 0v12M0 3h12M0 6h12M0 9h12" stroke="#409040" strokeDasharray="1 1" />
          <path d="M11 1v11H1" stroke="#fff" />
        </Svg>
        <Svg w={16} h={16}>
          <path d="M0 0h16v16H0z" fill="#000" />
          <path d="M1 2l4 11 4-11" stroke="#00a000" strokeWidth="2" />
          <path d="M10 7V2h4v5z" stroke="#2060ff" />
          <path d="M10 9h4v2h-4v3h5" stroke="#f02020" strokeWidth="2" />
        </Svg>
        <time>15:21</time>
      </Tray>
    </TaskbarRight>
  </Taskbar>
);

const App = () => (
  <Screen>
    <GlobalStyle />
    <WindowHeader />
    <Workspace>
      <Columns>
        <FractionPanel />
        <CurvePanel />
        <DetailPanel />
      </Columns>
      <Comments />
    </Workspace>
    <StatusBar>
      <StatusCell $w={88}>* 2016/01/21 *</StatusCell>
      <StatusCell $w={132} />
      <StatusCell $w={179}>HR</StatusCell>
      <StatusCell $left>Recall Mode</StatusCell>
      <StatusCell $w={36}>ADM</StatusCell>
    </StatusBar>
    <Desktop />
  </Screen>
);

export default App;
